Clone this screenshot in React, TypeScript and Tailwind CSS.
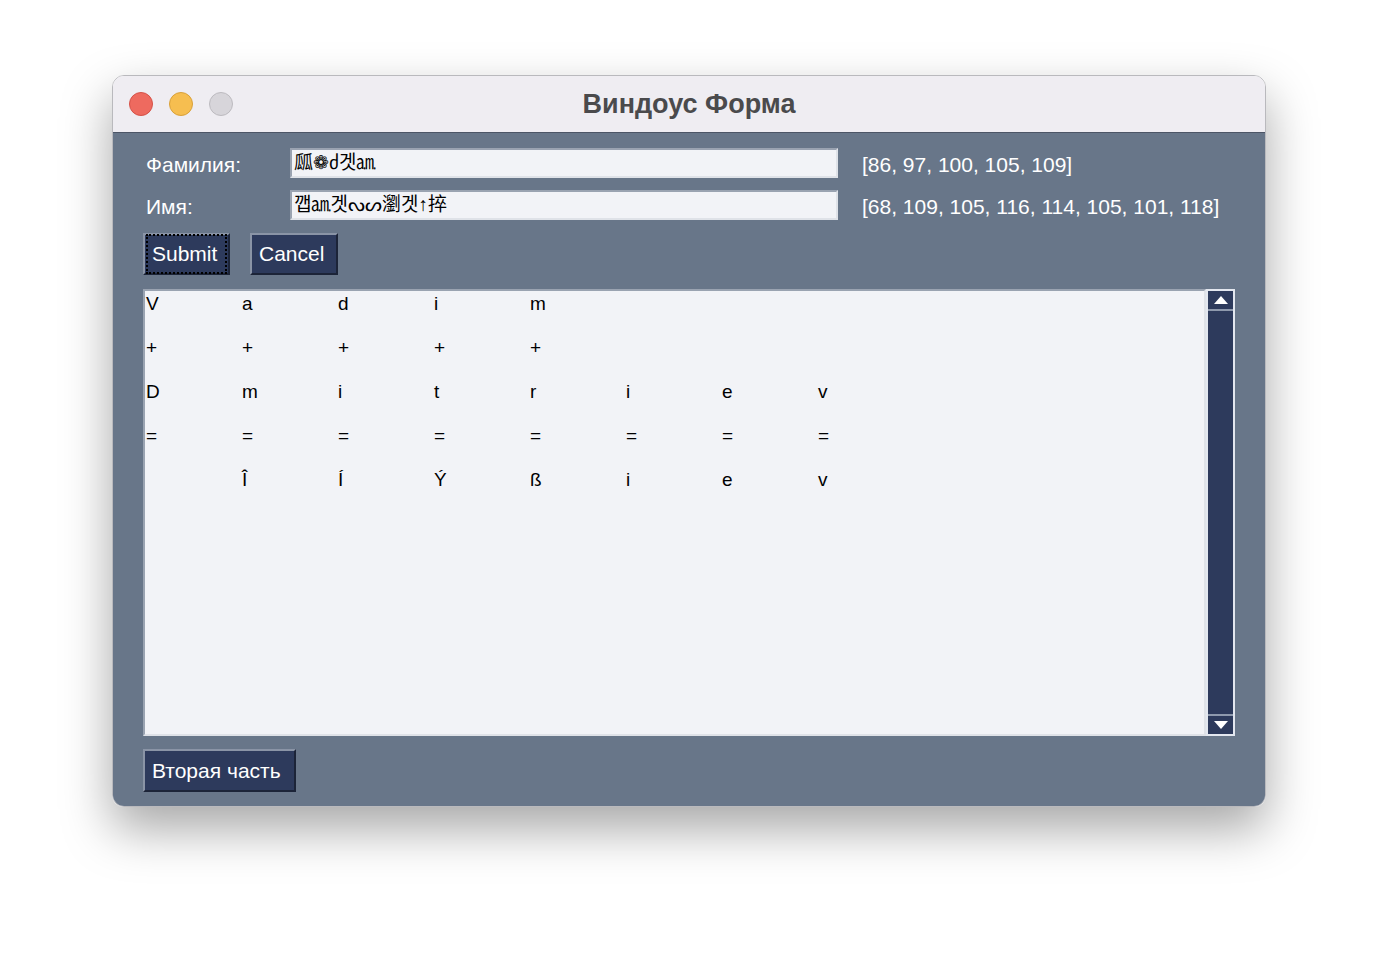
import React from 'react';

const rows: string[][] = [
  ['V', 'a', 'd', 'i', 'm'],
  ['+', '+', '+', '+', '+'],
  ['D', 'm', 'i', 't', 'r', 'i', 'e', 'v'],
  ['=', '=', '=', '=', '=', '=', '=', '='],
  ['', 'Î', 'Í', 'Ý', 'ß', 'i', 'e', 'v'],
];

const font = { fontFamily: '"Liberation Sans", "Noto Sans CJK SC", Arial, sans-serif' };

const Field: React.FC<{ label: string; value: string; codes: string }> = ({ label, value, codes }) => (
  <div className="flex items-center h-[30px]">
    <div className="w-[147px] pl-[3px] text-[21px] text-white pt-[3px]">{label}</div>
    <div className="w-[548px] h-[30px] bg-[#f2f3f7] border-2 border-t-[#9aa3b1] border-l-[#9aa3b1] border-r-[#dfe2e8] border-b-[#dfe2e8] flex items-center px-[2px] text-[19px] text-black whitespace-nowrap overflow-hidden">
      {value}
    </div>
    <div className="ml-[24px] text-[21px] text-white pt-[3px]">{codes}</div>
  </div>
);

const NavyButton: React.FC<{ children: React.ReactNode; focused?: boolean; className?: string }> = ({ children, focused, className }) => (
  <button
    className={`h-[42px] bg-[#2d3a5c] border-2 border-t-[#8a94a6] border-l-[#8a94a6] border-r-[#1c2438] border-b-[#1c2438] text-white text-[21px] px-[2px] ${className ?? ''}`}
  >
    <span className={`flex items-center h-full px-[5px] ${focused ? 'outline-2 outline-dotted outline-black -outline-offset-1' : ''}`}>
      {children}
    </span>
  </button>
);

const App: React.FC = () => {
  return (
    <div className="w-[1378px] h-[956px] bg-white overflow-hidden" style={font}>
      <div className="ml-[112px] mt-[75px] w-[1154px] h-[732px] rounded-[12px] overflow-hidden border border-[#b9b9bd] shadow-[0_22px_50px_rgba(0,0,0,0.35)] flex flex-col">
        {/* Title bar */}
        <div className="relative h-[57px] bg-[#efedf2] border-b border-[#4c5566] flex items-center shrink-0">
          <div className="flex items-center gap-[16px] pl-[16px]">
            <span className="w-[24px] h-[24px] rounded-full bg-[#ee6a5f] border border-[#d55248]" />
            <span className="w-[24px] h-[24px] rounded-full bg-[#f6be50] border border-[#d9a13a]" />
            <span className="w-[24px] h-[24px] rounded-full bg-[#d7d5da] border border-[#bdbbc0]" />
          </div>
          <div className="absolute inset-0 flex items-center justify-center text-[27px] font-bold text-[#4a4a4c]">
            Виндоус Форма
          </div>
        </div>

        {/* Body */}
        <div className="flex-1 bg-[#687689] pt-[15px] px-[30px] flex flex-col">
          <div className="flex flex-col gap-[12px]">
            <Field label="Фамилия:" value="㼌❁ძ겟㏂" codes="[86, 97, 100, 105, 109]" />
            <Field label="Имя:" value="깹㏂겟ᔓᔕ瀏겟↑捽" codes="[68, 109, 105, 116, 114, 105, 101, 118]" />
          </div>

          <div className="flex gap-[20px] mt-[13px]">
            <NavyButton focused className="w-[87px]">Submit</NavyButton>
            <NavyButton className="w-[88px]">Cancel</NavyButton>
          </div>

          <div className="flex mt-[14px] h-[447px]">
            <div className="flex-1 bg-[#f2f3f7] border-2 border-t-[#9aa3b1] border-l-[#9aa3b1] border-r-[#dfe2e8] border-b-[#dfe2e8] pl-[1px] pt-[1px]">
              {rows.map((row, i) => (
                <div key={i} className="flex h-[44px] items-start">
                  {row.map((c, j) => (
                    <div key={j} className="w-[96px] leading-[24px] text-[19px] text-black">
                      {c}
                    </div>
                  ))}
                </div>
              ))}
            </div>
            <div className="w-[29px] bg-[#2d3a5c] border-2 border-[#e3e7ef] flex flex-col justify-between">
              <div className="h-[20px] border-b-2 border-[#8e99ad] flex items-center justify-center">
                <svg width="16" height="10" viewBox="0 0 16 10">
                  <polygon points="8,1 15,9 1,9" fill="#ffffff" />
                </svg>
              </div>
              <div className="h-[20px] border-t-2 border-[#8e99ad] flex items-center justify-center">
                <svg width="16" height="10" viewBox="0 0 16 10">
                  <polygon points="1,1 15,1 8,9" fill="#ffffff" />
                </svg>
              </div>
            </div>
          </div>

          <div className="mt-[13px]">
            <NavyButton className="w-[153px] h-[43px]">Вторая часть</NavyButton>
          </div>
        </div>
      </div>
    </div>
  );
};

export default App;
